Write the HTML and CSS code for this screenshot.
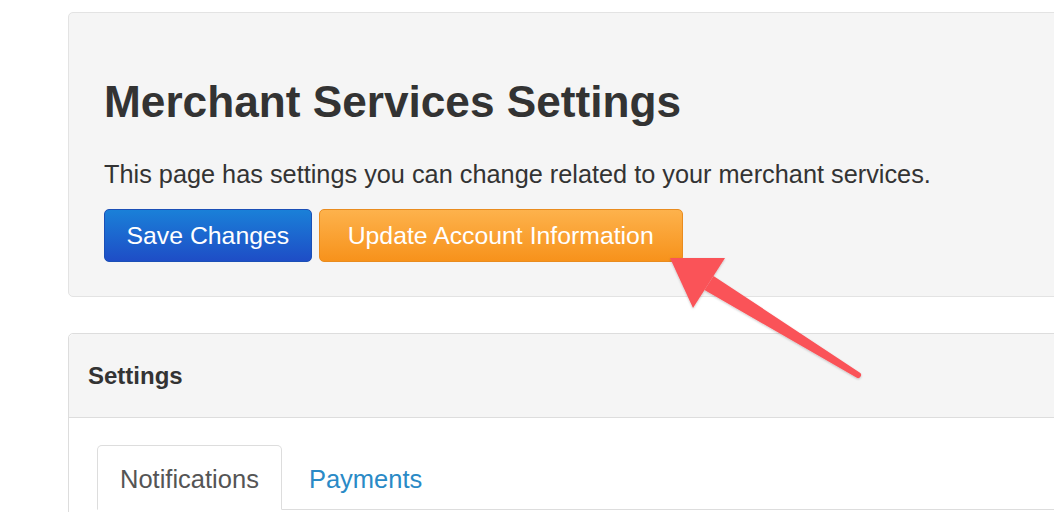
FILE: index.html
```html
<!DOCTYPE html>
<html lang="en">
<head>
<meta charset="utf-8">
<title>Merchant Services Settings</title>
<link rel="stylesheet" href="styles.css">
</head>
<body>
<div class="page">
  <section class="hero">
    <h1 class="hero-title">Merchant Services Settings</h1>
    <p class="hero-text">This page has settings you can change related to your merchant services.</p>
    <div class="actions">
      <button class="btn btn-primary" type="button">Save Changes</button>
      <button class="btn btn-warning" type="button">Update Account Information</button>
    </div>
  </section>
  <section class="panel">
    <div class="panel-heading"><h3 class="panel-title">Settings</h3></div>
    <div class="panel-body">
      <ul class="tabs">
        <li class="tab active">Notifications</li>
        <li class="tab">Payments</li>
      </ul>
    </div>
  </section>
</div>
<svg class="annotation" width="1054" height="512" viewBox="0 0 1054 512" aria-hidden="true">
  <defs>
    <filter id="shadow" x="-10%" y="-10%" width="130%" height="130%">
      <feDropShadow dx="0" dy="1" stdDeviation="1.2" flood-color="#000" flood-opacity="0.22"/>
    </filter>
  </defs>
  <g fill="#fa5258" filter="url(#shadow)">
    <path d="M713.5 276 L859.6 372.4 A3 3 0 0 1 856.4 377.6 L704.5 290 Z"/>
    <polygon points="670,258 725,258 693,308"/>
  </g>
</svg>
</body>
</html>
```
FILE: styles.css
```css
html, body {
  margin: 0;
  padding: 0;
  overflow: hidden;
  background: #ffffff;
}

body {
  font-family: "Liberation Sans", Arial, Helvetica, sans-serif;
  color: #333333;
  position: relative;
  width: 1054px;
  height: 512px;
}

.page {
  padding: 12px 0 0 68px;
  width: 1060px;
}

.hero {
  background: #f5f5f5;
  border: 1px solid #e3e3e3;
  border-radius: 5px;
  padding: 65px 35px 34px 35px;
}

.hero-title {
  margin: 0;
  font-size: 44.2px;
  line-height: 48px;
  font-weight: bold;
  color: #333333;
}

.hero-text {
  margin: 33px 0 0;
  font-size: 25.3px;
  line-height: 30px;
  color: #333333;
}

.actions {
  display: flex;
  gap: 7px;
  margin-top: 20px;
}

.btn {
  font-family: inherit;
  font-size: 24.8px;
  line-height: 31px;
  padding: 10px 21.5px;
  border-radius: 5px;
  border: 1px solid transparent;
  color: #ffffff;
  cursor: pointer;
}

.btn-primary {
  background: linear-gradient(#1a80d8, #1e4dc6);
  border-color: #1b4fb6;
}

.btn-warning {
  background: linear-gradient(#fdb24c, #f7921b);
  border-color: #e98c1f;
  padding: 10px 28px;
}

.panel {
  margin-top: 36px;
  background: #ffffff;
  border: 1px solid #dddddd;
  border-radius: 5px;
  height: 240px;
}

.panel-heading {
  background: #f5f5f5;
  border-bottom: 1px solid #dddddd;
  border-radius: 5px 5px 0 0;
  padding: 29px 19px 28px;
}

.panel-title {
  margin: 0;
  font-size: 24px;
  line-height: 26px;
  font-weight: bold;
  color: #333333;
}

.panel-body {
  padding: 27px 28px 0;
}

.tabs {
  display: flex;
  list-style: none;
  margin: 0;
  padding: 0;
  border-bottom: 1px solid #dddddd;
}

.tab {
  font-size: 25.5px;
  line-height: 30px;
  padding: 18px 22px 15px;
  margin-right: 4px;
  margin-bottom: -1px;
  border: 1px solid transparent;
  border-radius: 5px 5px 0 0;
  color: #2a8ac6;
}

.tab.active {
  color: #555555;
  background: #ffffff;
  border-color: #dddddd #dddddd transparent;
}

.annotation {
  position: absolute;
  left: 0;
  top: 0;
  pointer-events: none;
}
```
